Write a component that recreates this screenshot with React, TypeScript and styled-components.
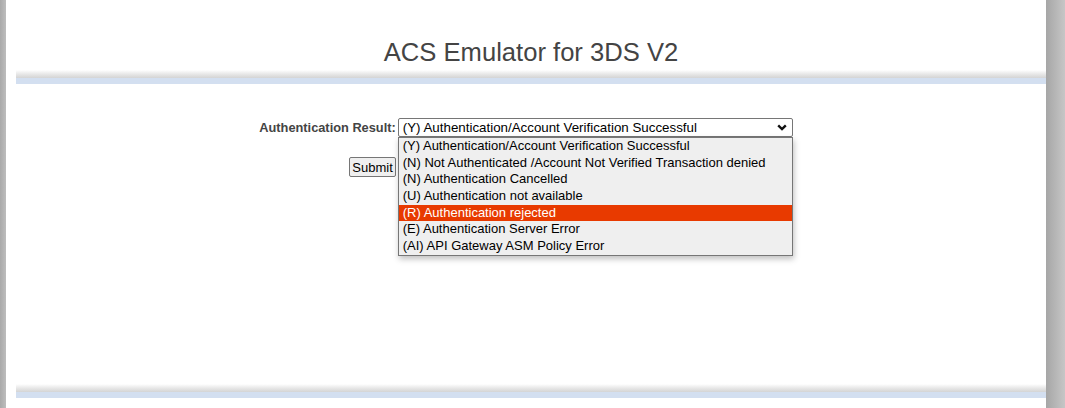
import React from "react";
import styled, { createGlobalStyle } from "styled-components";

const GlobalStyle = createGlobalStyle`
  html, body {
    margin: 0;
    padding: 0;
    background: #ffffff;
  }
  body {
    font-family: "Liberation Sans", Arial, sans-serif;
  }
`;

const options = [
  "(Y) Authentication/Account Verification Successful",
  "(N) Not Authenticated /Account Not Verified Transaction denied",
  "(N) Authentication Cancelled",
  "(U) Authentication not available",
  "(R) Authentication rejected",
  "(E) Authentication Server Error",
  "(AI) API Gateway ASM Policy Error",
];

const App = () => {
  const highlighted = 4;
  return (
    <>
      <GlobalStyle />
      <Page>
        <LeftStrip />
        <Main>
          <Title>ACS Emulator for 3DS V2</Title>
          <Bar />
          <FormGrid>
            <Label>Authentication Result:</Label>
            <SelectWrap>
              <SelectBox>
                <SelectText>{options[0]}</SelectText>
                <Chevron width={10} height={7} viewBox="0 0 10 7">
                  <polyline points="1.2,1.3 5,5 8.8,1.3" fill="none" stroke="#111" strokeWidth={2.4} />
                </Chevron>
              </SelectBox>
              <OptionList>
                {options.map((opt, i) => (
                  <OptionItem key={i} $active={i === highlighted}>
                    {opt}
                  </OptionItem>
                ))}
              </OptionList>
            </SelectWrap>
            <ButtonCell>
              <SubmitButton>Submit</SubmitButton>
            </ButtonCell>
            <div />
          </FormGrid>
          <Spacer />
          <Bar />
        </Main>
        <RightStrip />
      </Page>
    </>
  );
};

const Page = styled.div`
  display: flex;
  flex-direction: row;
  height: 408px;
  overflow: hidden;
`;

const LeftStrip = styled.div`
  width: 6px;
  flex-shrink: 0;
  background: linear-gradient(to right, #a9a9a9, #bdbdbd);
`;

const RightStrip = styled.div`
  width: 19px;
  flex-shrink: 0;
  background: linear-gradient(to right, #a6a6a6, #c6c6c6);
`;

const Main = styled.div`
  flex: 1;
  display: flex;
  flex-direction: column;
  background: #ffffff;
  padding: 38px 0 10px 10px;
  box-sizing: border-box;
`;

const Title = styled.h1`
  margin: 0 0 4px 0;
  height: 28px;
  font-size: 25.6px;
  line-height: 28px;
  font-weight: 400;
  text-align: center;
  color: #444444;
`;

const Bar = styled.div`
  height: 14px;
  flex-shrink: 0;
  background: linear-gradient(
    to bottom,
    #ffffff 0px,
    #e8e8e8 4px,
    #d4d4d4 8px,
    #d3dff0 8px,
    #d3dff0 14px
  );
`;

const FormGrid = styled.div`
  display: grid;
  grid-template-columns: auto 395px;
  column-gap: 2px;
  row-gap: 20px;
  align-self: center;
  align-items: center;
  margin: 34px 10px 0 0;
`;

const Label = styled.label`
  font-size: 12.8px;
  font-weight: 700;
  color: #444444;
  text-align: right;
  line-height: 19px;
`;

const SelectWrap = styled.div`
  position: relative;
`;

const SelectBox = styled.div`
  height: 19px;
  box-sizing: border-box;
  border: 1px solid #767676;
  border-radius: 2px;
  background: #ffffff;
  display: flex;
  align-items: center;
  justify-content: space-between;
  padding: 0 5px 0 4px;
`;

const SelectText = styled.span`
  font-size: 13.33px;
  color: #000000;
  line-height: 17px;
  white-space: nowrap;
`;

const Chevron = styled.svg`
  display: block;
`;

const OptionList = styled.div`
  position: absolute;
  top: 19px;
  left: 0;
  right: 0;
  background: #efefef;
  border: 1px solid #767676;
  box-shadow: 1px 3px 6px rgba(0, 0, 0, 0.25);
  z-index: 10;
`;

const OptionItem = styled.div<{ $active?: boolean }>`
  height: 16.7px;
  line-height: 16.7px;
  padding-left: 4px;
  font-size: 13px;
  white-space: nowrap;
  color: ${(props) => (props.$active ? "#ffffff" : "#000000")};
  background: ${(props) => (props.$active ? "#e83a00" : "transparent")};
`;

const ButtonCell = styled.div`
  display: flex;
  justify-content: flex-end;
`;

const SubmitButton = styled.button`
  font-family: "Liberation Sans", Arial, sans-serif;
  font-size: 13px;
  height: 20px;
  padding: 0 2px;
  margin: 0;
  color: #000000;
  background: #efefef;
  border: 1px solid #767676;
  border-radius: 2px;
`;

const Spacer = styled.div`
  flex: 1;
`;

export default App;
